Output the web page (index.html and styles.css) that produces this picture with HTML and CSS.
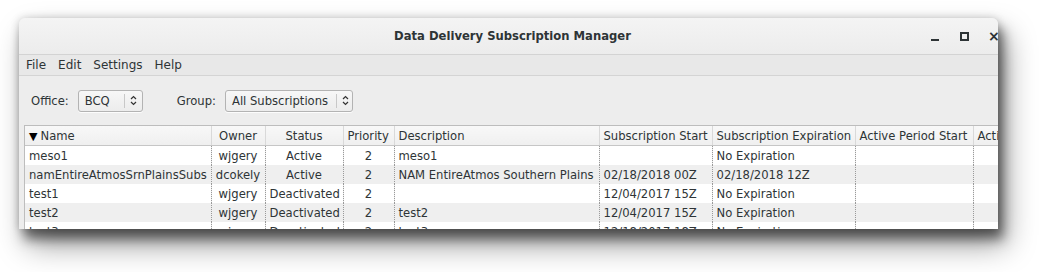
FILE: index.html
```html
<!DOCTYPE html>
<html>
<head>
<meta charset="utf-8">
<link rel="stylesheet" href="styles.css">
</head>
<body>
<div class="window">
  <div class="titlebar">
    <div class="title">Data Delivery Subscription Manager</div>
    <div class="controls">
      <span class="ctl min"></span>
      <span class="ctl max"></span>
      <span class="ctl close">×</span>
    </div>
  </div>
  <div class="menubar">
    <span>File</span><span>Edit</span><span>Settings</span><span>Help</span>
  </div>
  <div class="toolbar">
    <label>Office:</label>
    <div class="combo office"><span class="val">BCQ</span><span class="arrows"><svg width="7" height="11" viewBox="0 0 7 11"><path d="M1 4 L3.5 1.5 L6 4 M1 7 L3.5 9.5 L6 7" fill="none" stroke="#333" stroke-width="1.2"/></svg></span></div>
    <label class="grp">Group:</label>
    <div class="combo group"><span class="val">All Subscriptions</span><span class="arrows"><svg width="7" height="11" viewBox="0 0 7 11"><path d="M1 4 L3.5 1.5 L6 4 M1 7 L3.5 9.5 L6 7" fill="none" stroke="#333" stroke-width="1.2"/></svg></span></div>
  </div>
  <div class="tablewrap">
    <table>
      <colgroup>
        <col class="c-name"><col class="c-owner"><col class="c-status"><col class="c-prio"><col class="c-desc"><col class="c-start"><col class="c-exp"><col class="c-aps"><col class="c-ape">
      </colgroup>
      <thead>
        <tr>
          <th class="l"><span class="sort">▼</span>Name</th>
          <th>Owner</th>
          <th>Status</th>
          <th class="l">Priority</th>
          <th class="l">Description</th>
          <th class="l">Subscription Start</th>
          <th class="l">Subscription Expiration</th>
          <th class="l">Active Period Start</th>
          <th class="l">Active Period End</th>
        </tr>
      </thead>
      <tbody>
        <tr><td>meso1</td><td class="c">wjgery</td><td class="c">Active</td><td class="c">2</td><td>meso1</td><td></td><td>No Expiration</td><td></td><td></td></tr>
        <tr class="alt"><td>namEntireAtmosSrnPlainsSubs</td><td class="c">dcokely</td><td class="c">Active</td><td class="c">2</td><td>NAM EntireAtmos Southern Plains</td><td>02/18/2018 00Z</td><td>02/18/2018 12Z</td><td></td><td></td></tr>
        <tr><td>test1</td><td class="c">wjgery</td><td class="c">Deactivated</td><td class="c">2</td><td></td><td>12/04/2017 15Z</td><td>No Expiration</td><td></td><td></td></tr>
        <tr class="alt"><td>test2</td><td class="c">wjgery</td><td class="c">Deactivated</td><td class="c">2</td><td>test2</td><td>12/04/2017 15Z</td><td>No Expiration</td><td></td><td></td></tr>
        <tr><td>test3</td><td class="c">wjgery</td><td class="c">Deactivated</td><td class="c">2</td><td>test3</td><td>12/18/2017 18Z</td><td>No Expiration</td><td></td><td></td></tr>
      </tbody>
    </table>
  </div>
</div>
</body>
</html>
```
FILE: styles.css
```css
html, body {
  margin: 0;
  padding: 0;
  background: #ffffff;
}
html {
  height: 272px;
  overflow: hidden;
}
body {
  height: 272px;
  box-sizing: border-box;
  padding: 18px 0 0 19px;
  font-family: "DejaVu Sans", sans-serif;
  font-size: 11.6px;
  color: #2e3436;
}
.window {
  width: 979px;
  height: 211px;
  background: #ededed;
  border-radius: 6px 6px 0 0;
  overflow: hidden;
  box-shadow: 5px 10px 12px rgba(0,0,0,0.5), 8px 16px 30px rgba(0,0,0,0.4), 0 0 8px rgba(0,0,0,0.18);
  display: flex;
  flex-direction: column;
}
.titlebar {
  height: 36px;
  flex: none;
  background: linear-gradient(#f4f4f4, #ececec);
  border-bottom: 1px solid #d3d3d3;
  display: flex;
  align-items: center;
  justify-content: center;
  position: relative;
}
.title {
  font-weight: bold;
  font-size: 11.6px;
  color: #2e3436;
  padding-left: 8px;
}
.controls {
  position: absolute;
  right: 2px;
  top: 0;
  height: 36px;
  display: flex;
  align-items: center;
  gap: 19px;
}
.ctl {
  display: block;
  width: 10px;
  height: 10px;
  position: relative;
}
.ctl.min::after {
  content: "";
  position: absolute;
  left: 1px;
  bottom: 0;
  width: 8px;
  height: 2px;
  background: #2e3436;
}
.ctl.max::after {
  content: "";
  position: absolute;
  left: 1px;
  top: 1px;
  width: 5px;
  height: 5px;
  border: 2px solid #2e3436;
}
.ctl.close {
  font-weight: bold;
  font-size: 14px;
  line-height: 10px;
  width: 8px;
  color: #2e3436;
}
.menubar {
  height: 20px;
  flex: none;
  background: #e8e8e8;
  border-bottom: 1px solid #d4d4d4;
  display: flex;
  align-items: center;
  padding-left: 7px;
  gap: 12px;
  font-size: 12px;
  color: #2e3436;
}
.toolbar {
  height: 49px;
  flex: none;
  display: flex;
  align-items: center;
  padding-left: 12px;
}
.toolbar label {
  margin-right: 9px;
}
.toolbar .grp {
  margin-left: 34px;
}
.combo {
  height: 22px;
  box-sizing: border-box;
  border: 1px solid #b3b3b3;
  border-radius: 3px;
  background: linear-gradient(#f7f7f7, #ececec);
  display: flex;
  align-items: center;
  white-space: nowrap;
  box-shadow: 0 1px 0 rgba(255,255,255,0.8);
}
.combo .val {
  padding: 0 8px 0 6px;
  flex: 1;
}
.combo.office { width: 65px; }
.combo.group { width: 128px; }
.combo .arrows {
  border-left: 1px solid #c8c8c8;
  height: 14px;
  padding: 0 5px 0 5px;
  display: flex;
  align-items: center;
}
.tablewrap {
  margin-left: 5px;
  flex: 1;
  overflow: hidden;
  border-top: 1px solid #bdbdbd;
  border-left: 1px solid #bdbdbd;
}
table {
  border-collapse: collapse;
  table-layout: fixed;
  width: 1080px;
}
.c-name { width: 186px; }
.c-owner { width: 54px; }
.c-status { width: 78px; }
.c-prio { width: 51px; }
.c-desc { width: 205px; }
.c-start { width: 113px; }
.c-exp { width: 143px; }
.c-aps { width: 118px; }
.c-ape { width: 132px; }
th {
  height: 19px;
  padding: 0 4px;
  font-weight: normal;
  text-align: center;
  background: linear-gradient(#f8f8f8, #efefef);
  border-bottom: 1px solid #c6c6c6;
  border-right: 1px solid #d9d9d9;
  white-space: nowrap;
  overflow: hidden;
  color: #2e3436;
}
th.l { text-align: left; }
.sort {
  font-size: 11px;
  margin-right: 3px;
  color: #000;
}
td {
  height: 19px;
  padding: 0 4px;
  white-space: nowrap;
  overflow: hidden;
  border-right: 1px dotted #9a9a9a;
  color: #2e3436;
}
td.c { text-align: center; }
tbody tr { background: #ffffff; }
tbody tr.alt { background: #efefef; }
```
